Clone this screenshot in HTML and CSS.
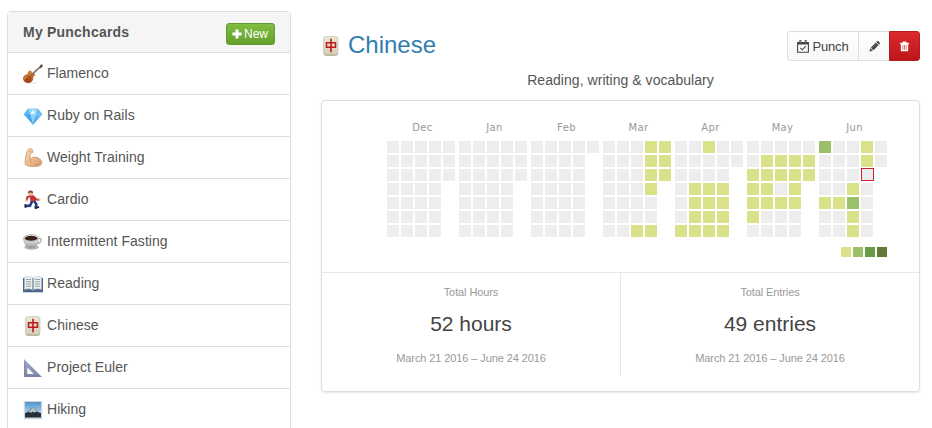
FILE: index.html
```html
<!DOCTYPE html>
<html lang="en">
<head>
<meta charset="utf-8">
<title>Punchcards</title>
<link rel="stylesheet" href="styles.css">
</head>
<body>
<svg class="defs" aria-hidden="true">
  <defs>
    <linearGradient id="gem" x1="0" y1="0" x2="0" y2="1"><stop offset="0" stop-color="#a9e2fb"/><stop offset="1" stop-color="#2589dc"/></linearGradient>
    <linearGradient id="ivory" x1="0" y1="0" x2="0" y2="1"><stop offset="0" stop-color="#ece6d4"/><stop offset="1" stop-color="#d6d0b9"/></linearGradient>
    <linearGradient id="skin" x1="0" y1="0" x2="1" y2="1"><stop offset="0" stop-color="#fbdcb8"/><stop offset="1" stop-color="#d99a6c"/></linearGradient>
    <linearGradient id="wood" x1="0" y1="0" x2="0" y2="1"><stop offset="0" stop-color="#e08f35"/><stop offset="1" stop-color="#a63a12"/></linearGradient>
    <linearGradient id="cup" x1="0" y1="0" x2="0" y2="1"><stop offset="0" stop-color="#f5f5f5"/><stop offset="1" stop-color="#98989c"/></linearGradient>
    <linearGradient id="sky" x1="0" y1="0" x2="0" y2="1"><stop offset="0" stop-color="#4f96d2"/><stop offset="1" stop-color="#cfe6f3"/></linearGradient>
    <linearGradient id="steel" x1="0" y1="0" x2="0" y2="1"><stop offset="0" stop-color="#a3acca"/><stop offset="1" stop-color="#7a86a8"/></linearGradient>
    <symbol id="tile" viewBox="0 0 20 20">
      <rect x="2.700" y="1.400" width="14.300" height="18.400" rx="2.200" fill="#a9a48a"/>
      <rect x="2.700" y=".6" width="14.300" height="18" rx="2.200" fill="url(#ivory)" stroke="#c0bba5" stroke-width=".6"/>
      <g fill="none" stroke="#bd1c1c"><path d="M5.500 6.700h9v4.600h-9z" stroke-width="1.500"/><path d="M10 2.800v13.500" stroke-width="1.600"/></g>
    </symbol>
  </defs>
</svg>
<div class="page">
  <aside class="panel">
    <header class="panel-head">
      <h2>My Punchcards</h2>
      <button class="new"><svg viewBox="0 0 10 10"><path d="M3.500 .4h3v3.100h3.100v3H6.500v3.100h-3V6.500H.4v-3h3.100z" fill="#fff"/></svg>New</button>
    </header>
    <ul class="list">
      <li><svg viewBox="0 0 20 20"><ellipse cx="8" cy="18.800" rx="7" ry=".6" fill="#e2e2e2"/><path d="M5 9.500c.2-2 1.700-3.200 2.600-2.500.9.800.7 1.800 2 2.300 1.400.4 2.400.6 2.200 1.700-.2.900-1.700.9-1.900 2.200-.2 1.400.2 2.300-.9 3.700-1.500 1.900-4.600 2.300-6.700 1.100C.3 16.800-.1 14.200 1 12.300c1-1.500 3.700-1.200 4-2.800z" fill="url(#wood)" stroke="#9a4216" stroke-width=".5"/><path d="M7.700 11.500 17 3.200" stroke="#8d7566" stroke-width="1.700"/><path d="m16.200 2.900 1.700-2.300 1.900.2-.3 1.800-2 1.800z" fill="#5c4235"/><path d="m3.500 14.200 1.900 1.900M5.600 11.900l2 2" stroke="#4e2a1c" stroke-width=".9"/><path d="M1.500 14.500c.2-1 .9-1.400 1.700-1.600" fill="none" stroke="#f1b84f"/></svg>Flamenco</li>
      <li><svg viewBox="0 0 20 20"><path d="M5 3h10l4 5.300L10 18.500 1 8.300z" fill="url(#gem)" stroke="#62b4e9" stroke-width=".7"/><path d="M1 8.300 5 3l2 5.300zM19 8.300 15 3l-2 5.300z" fill="#63bcef"/><path d="m7 8.300 3-5.100 3 5.100z" fill="#d9f5ff"/><path d="m7 8.300 3 10 3-10z" fill="#8ad4fa"/><path d="M1.300 8.300 7 8.300l2.700 9z" fill="#45a7ed"/></svg>Ruby on Rails</li>
      <li><svg viewBox="0 0 20 20"><path d="M4.400 2.500C5 .8 7.600.4 9 1.300c1 .8 1.100 2.200.4 3.200L7.800 5.200c-.7 1.900-1 3.800-.6 5.900 1.600-2 4.600-2.700 7-1.500 3 .9 4.700 3 4.600 5.400-.3 2.600-3.800 3.500-7.600 3.500-4.200 0-7.700-.5-9.200-2.300 0-4.500.8-8.700 2.400-13.700z" fill="url(#skin)" stroke="#c9895c" stroke-width=".7"/><path d="M7.200 11c-.3 1.600.2 2.700 1.400 3.500M6 3.500l2.200.4M12 16.800c2 0 4-.6 5-1.600" fill="none" stroke="#c08055" stroke-width=".7"/></svg>Weight Training</li>
      <li><svg viewBox="0 0 20 20"><path d="m8.500 5.800-4 1.300-1 3.500M11 7l2.300 2.500 3.200.2" fill="none" stroke="#b23a37" stroke-width="2"/><circle cx="3.400" cy="10.700" r="1.100" fill="#efbd93"/><circle cx="16.500" cy="9.600" r="1.100" fill="#efbd93"/><path d="m6.500 5.500 4.700-.3 1.500 6.300-5 1z" fill="#cc303a"/><path d="m9 11.500-2 4.300-4.200.1M11 11l2.300 3-.6 3.700" fill="none" stroke="#263b79" stroke-width="2.600"/><path d="m2.300 14.300.2 3.400M11.800 18.400l4.200-1.600" stroke="#171f50" stroke-width="1.900"/><circle cx="7.500" cy="3.300" r="2.500" fill="#edb78d"/><path d="M4.700 3c0-3 4.300-3.500 5.500-1l-.5 1.500-1.800-1z" fill="#7e4730"/></svg>Cardio</li>
      <li><svg viewBox="0 0 20 20"><ellipse cx="8.500" cy="15.200" rx="7" ry="2.600" fill="#b4b4b8"/><path d="M14.600 6.500c5-1.600 5 4.900-1.700 5.200" fill="none" stroke="#a5a5a9" stroke-width="1.200"/><path d="M.7 6c0 6 3.100 10 7.300 10s7.500-4 7.500-10z" fill="url(#cup)" stroke="#888" stroke-width=".5"/><ellipse cx="8.100" cy="5.900" rx="7.500" ry="3.300" fill="#eee" stroke="#999" stroke-width=".6"/><ellipse cx="8.100" cy="6.200" rx="6.200" ry="2.500" fill="#3b211b"/></svg>Intermittent Fasting</li>
      <li><svg viewBox="0 0 20 20"><path d="M0 4h20v14.300H0z" fill="#4d6886"/><path d="M1.500 3C5 2 8 2.500 10 4c2-1.500 5-2 8.500-1v12.500c-3-1-6-.8-8.500.5-2.500-1.300-5.500-1.500-8.500-.5z" fill="#eceff0" stroke="#b4bfc8" stroke-width=".5"/><path d="M10 4v12.500" stroke="#728598" stroke-width="1.300"/><path d="M3 5.500h5M3 7.700h5M3 10h5M3 12.200h5M12 5.500h5M12 7.700h5M12 10h5M12 12.200h5" stroke="#98a4ad" stroke-width="1"/></svg>Reading</li>
      <li><svg><use href="#tile"/></svg>Chinese</li>
      <li><svg viewBox="0 0 20 20"><path fill-rule="evenodd" d="M1 1v18h18zm3.300 8.500 6.500 6.500H4.300z" fill="url(#steel)"/><path d="M2 4v13M3 18h13" stroke="#606c91" stroke-width=".8" stroke-dasharray=".6 .8"/></svg>Project Euler</li>
      <li><svg viewBox="0 0 20 20"><path d="M.8 1h18.400v18.200H.8z" fill="#d0d6db"/><path d="M2 2h16v15.500H2z" fill="url(#sky)"/><path d="M2 13.300c3-.9 5.500-4 7.900-5.800 2.700 2 4.600 4.800 8.100 5.800v4.200H2z" fill="#222f3a"/><path d="M4.700 12.500 10 7.500l5.400 5-2.400-1-1.400 1.300-1.800-1.300-1.800 1.400-.8-1z" fill="#bac4c5"/></svg>Hiking</li>
    </ul>
  </aside>
  <main>
    <div class="title-row">
      <h1><svg><use href="#tile"/></svg><a>Chinese</a></h1>
      <div class="actions">
        <button class="btn punch"><svg viewBox="0 0 12 13"><path d="M.6 3h10.800v9.300H.6z" fill="none" stroke="#444" stroke-width="1.100"/><path d="M.2 2h11.600v2.500H.2z" fill="#444"/><path d="M2.400 0h1.900v3H2.400zM7.700 0h1.900v3H7.700z" fill="#444"/><path d="M3.300.8v1.600M8.700.8v1.600" stroke="#ddd" stroke-width=".6"/><path d="m3.300 7.800 2 2 3.500-3.700" fill="none" stroke="#444" stroke-width="1.100"/></svg>Punch</button>
        <button class="btn edit"><svg viewBox="0 0 12 12"><path d="m.5 11.500.9-3.700 2.800 2.800zM2 7.200l5.500-5.500 2.800 2.800L4.800 10zM8 1.200l.8-.8c.4-.4 1-.3 1.400 0l1.500 1.500c.3.400.3.900 0 1.300l-.8.800z" fill="#444"/><path d="m3.500 7.400 4-4" stroke="#999" stroke-width=".5"/></svg></button>
        <button class="btn delete"><svg viewBox="0 0 12 12"><path d="M1.200 2h9.600v1.600H1.200zM4 .6h4V2H4zM2 3h8v8.300H2z" fill="#fff"/><path d="M4.200 4.300v5.200M6 4.300v5.200M7.800 4.300v5.200" stroke="#d54a4a" stroke-width=".8"/></svg></button>
      </div>
    </div>
    <p class="description">Reading, writing &amp; vocabulary</p>
    <section class="card">
      <div class="chart">
        <div class="months" id="months"></div>
        <div class="legend"><i class="q1"></i><i class="q2"></i><i class="q3"></i><i class="q4"></i></div>
      </div>
      <div class="stats">
        <div class="stat"><small>Total Hours</small><strong>52 hours</strong><small>March 21 2016 – June 24 2016</small></div>
        <div class="stat"><small>Total Entries</small><strong>49 entries</strong><small>March 21 2016 – June 24 2016</small></div>
      </div>
    </section>
  </main>
</div>
<script src="script.js"></script>
</body>
</html>
```
FILE: styles.css
```css
* { box-sizing: border-box; }
body { margin: 0; background: #fff; color: #555; font: 14px/20px "Liberation Sans", Arial, sans-serif; overflow: hidden; }
h1, h2, p, ul { margin: 0; padding: 0; font-weight: normal; }
svg { display: block; flex: none; }
button { font: inherit; margin: 0; }
.defs { position: absolute; width: 0; height: 0; }
.page { display: flex; gap: 30px; height: 428px; padding: 11px 12px 0 7px; overflow: hidden; }
.panel { flex: none; width: 284px; height: 440px; border: 1px solid #ddd; border-radius: 4px 4px 0 0; box-shadow: 0 1px 1px rgba(0,0,0,.05); }
.panel-head { display: flex; align-items: center; justify-content: space-between; height: 41px; padding: 0 15px; background: #f5f5f5; border-bottom: 1px solid #ddd; }
.panel-head h2 { font-size: 14px; font-weight: bold; letter-spacing: .22px; color: #555; }
.new { display: flex; align-items: center; gap: 2px; height: 22px; width: 49px; padding: 0 5px; margin-top: 3px; border: 1px solid #5f9e2e; border-radius: 3px; background: linear-gradient(#80bd41, #63a02c); color: #fff; font-size: 12px; }
.new svg { width: 10px; height: 10px; }
.list { list-style: none; }
.list li { display: flex; align-items: center; gap: 4px; height: 42px; padding: 0 15px 2px; letter-spacing: .04px; border-bottom: 1px solid #ddd; }
.list svg { width: 20px; height: 20px; margin-top: 3px; }
main { flex: 1; min-width: 0; padding-top: 20px; }
.title-row { display: flex; justify-content: space-between; height: 39px; }
h1 { display: flex; align-items: center; gap: 7px; height: 28px; font-size: 24px; color: #337db0; }
h1 svg { width: 20px; height: 20px; margin-top: 1px; }
.actions { display: flex; height: 30px; }
.btn { display: flex; align-items: center; justify-content: center; height: 30px; padding: 0; border: 1px solid #ddd; background: linear-gradient(#fff, #f7f7f7); color: #444; }
.punch { width: 72px; gap: 3px; padding-top: 1px; border-radius: 3px 0 0 3px; font-size: 13px; letter-spacing: -.15px; }
.punch svg { width: 12px; height: 13px; }
.edit { width: 31px; margin-left: -1px; border-right: 0; }
.edit svg { width: 11px; height: 11px; margin-top: 1px; }
.delete { width: 31px; border-color: #b51c20; border-radius: 0 3px 3px 0; background: linear-gradient(#dc2a2e, #bd161a); }
.delete svg { width: 11px; height: 11px; margin-top: 1px; }
.description { height: 30px; text-align: center; letter-spacing: .05px; }
.card { height: 292px; border: 1px solid #ddd; border-radius: 4px; box-shadow: 0 1px 2px rgba(0,0,0,.1); }
.chart { height: 172px; padding: 20px 32px 0 65px; border-bottom: 1px solid #e8e8e8; }
.months { display: flex; gap: 4px; }
.month { width: 68px; }
.month-name { height: 20px; padding-left: 3px; text-align: center; font: 10px/13px "DejaVu Sans", Verdana, sans-serif; letter-spacing: .35px; color: #999; }
.days { display: grid; grid-template-columns: repeat(5, 12px); grid-auto-rows: 12px; gap: 2px; }
.day { background: #ededed; }
.blank { visibility: hidden; }
.q1 { background: #dae289; }
.q2 { background: #9cc069; }
.q3 { background: #669d45; }
.q4 { background: #637939; }
.today { position: relative; }
.today::after { content: ""; position: absolute; inset: -1px -1px 0 0; border: 1px solid #cf2030; }
.legend { display: flex; justify-content: flex-end; gap: 2px; margin-top: 10px; }
.legend i { width: 10px; height: 10px; }
.stats { display: flex; height: 103px; }
.stat { flex: 1; display: flex; flex-direction: column; align-items: center; padding-top: 9px; }
.stat + .stat { border-left: 1px solid #e8e8e8; }
.stat small { font-size: 11px; line-height: 20px; letter-spacing: -.1px; color: #999; }
.stat strong { margin: 7px 0 9px; font-size: 21px; line-height: 30px; font-weight: normal; color: #444; }
```
FILE: script.js
```js
// One string per weekday row: "." no entry, 1-4 intensity, "t" today, space outside the month.
const calendar = {
  Dec: [".....", ".....", ".....", ".... ", ".... ", ".... ", ".... "],
  Jan: [".....", ".....", ".....", ".... ", ".... ", ".... ", ".... "],
  Feb: [".....", ".... ", ".... ", ".... ", ".... ", ".... ", ".... "],
  Mar: ["...11", "...11", "...11", "...1 ", ".... ", ".... ", "..11 "],
  Apr: ["..1..", ".....", ".... ", ".111 ", ".111 ", ".111 ", "1111 "],
  May: [".....", ".1111", "11111", "11.1 ", "1111 ", "1... ", ".... "],
  Jun: ["2..1.", "...1.", "...t ", "..1. ", "112. ", "..1. ", "..1. "]
};
const classFor = c => c === " " ? "blank" : c === "t" ? "today" : c === "." ? "" : "q" + c;
document.getElementById("months").innerHTML = Object.entries(calendar).map(([name, rows]) =>
  `<div class="month"><div class="month-name">${name}</div><div class="days">` +
  [...rows.join("")].map(c => `<span class="day ${classFor(c)}"></span>`).join("") +
  `</div></div>`).join("");
```
